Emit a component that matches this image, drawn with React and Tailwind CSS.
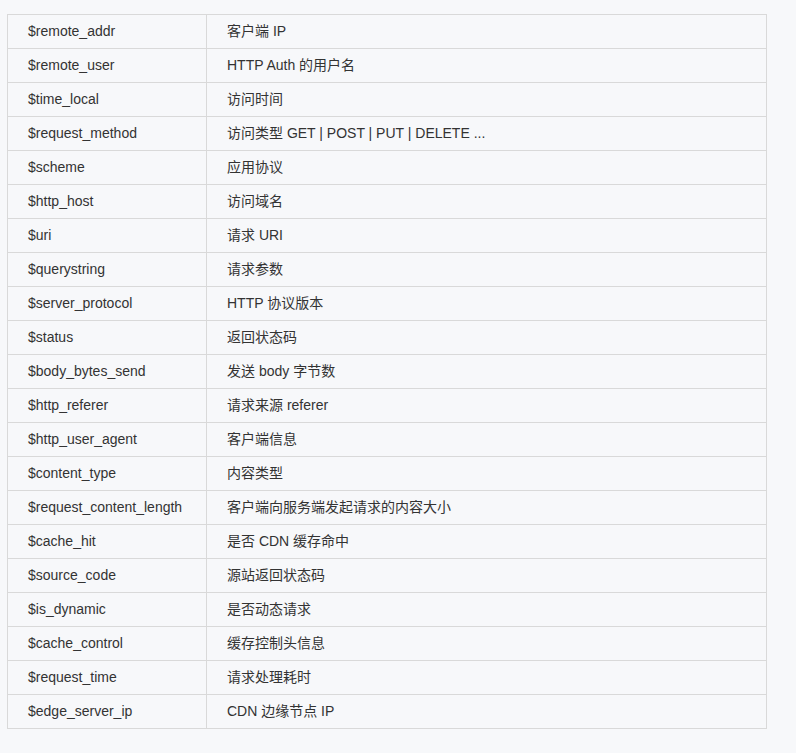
import React from 'react';

const rows = [
    ['$remote_addr', '客户端 IP'],
    ['$remote_user', 'HTTP Auth 的用户名'],
    ['$time_local', '访问时间'],
    ['$request_method', '访问类型 GET | POST | PUT | DELETE ...'],
    ['$scheme', '应用协议'],
    ['$http_host', '访问域名'],
    ['$uri', '请求 URI'],
    ['$querystring', '请求参数'],
    ['$server_protocol', 'HTTP 协议版本'],
    ['$status', '返回状态码'],
    ['$body_bytes_send', '发送 body 字节数'],
    ['$http_referer', '请求来源 referer'],
    ['$http_user_agent', '客户端信息'],
    ['$content_type', '内容类型'],
    ['$request_content_length', '客户端向服务端发起请求的内容大小'],
    ['$cache_hit', '是否 CDN 缓存命中'],
    ['$source_code', '源站返回状态码'],
    ['$is_dynamic', '是否动态请求'],
    ['$cache_control', '缓存控制头信息'],
    ['$request_time', '请求处理耗时'],
    ['$edge_server_ip', 'CDN 边缘节点 IP'],
];

const App = () => {
    return (
        <div className="min-h-[753px] bg-[#f7f8fa] pt-[14px] pl-[7px] font-['Liberation_Sans','Noto_Sans_CJK_SC',sans-serif] text-[14px] text-[#333]">
            <table className="w-[760px] border-collapse table-fixed">
                <colgroup>
                    <col className="w-[199px]" />
                    <col />
                </colgroup>
                <tbody>
                    {rows.map(([key, desc]) => (
                        <tr key={key} className="h-[34px]">
                            <td className="border border-[#d9d9d9] pl-[20px] leading-[33px] align-middle">{key}</td>
                            <td className="border border-[#d9d9d9] pl-[20px] leading-[33px] align-middle">{desc}</td>
                        </tr>
                    ))}
                </tbody>
            </table>
        </div>
    );
};

export default App;
